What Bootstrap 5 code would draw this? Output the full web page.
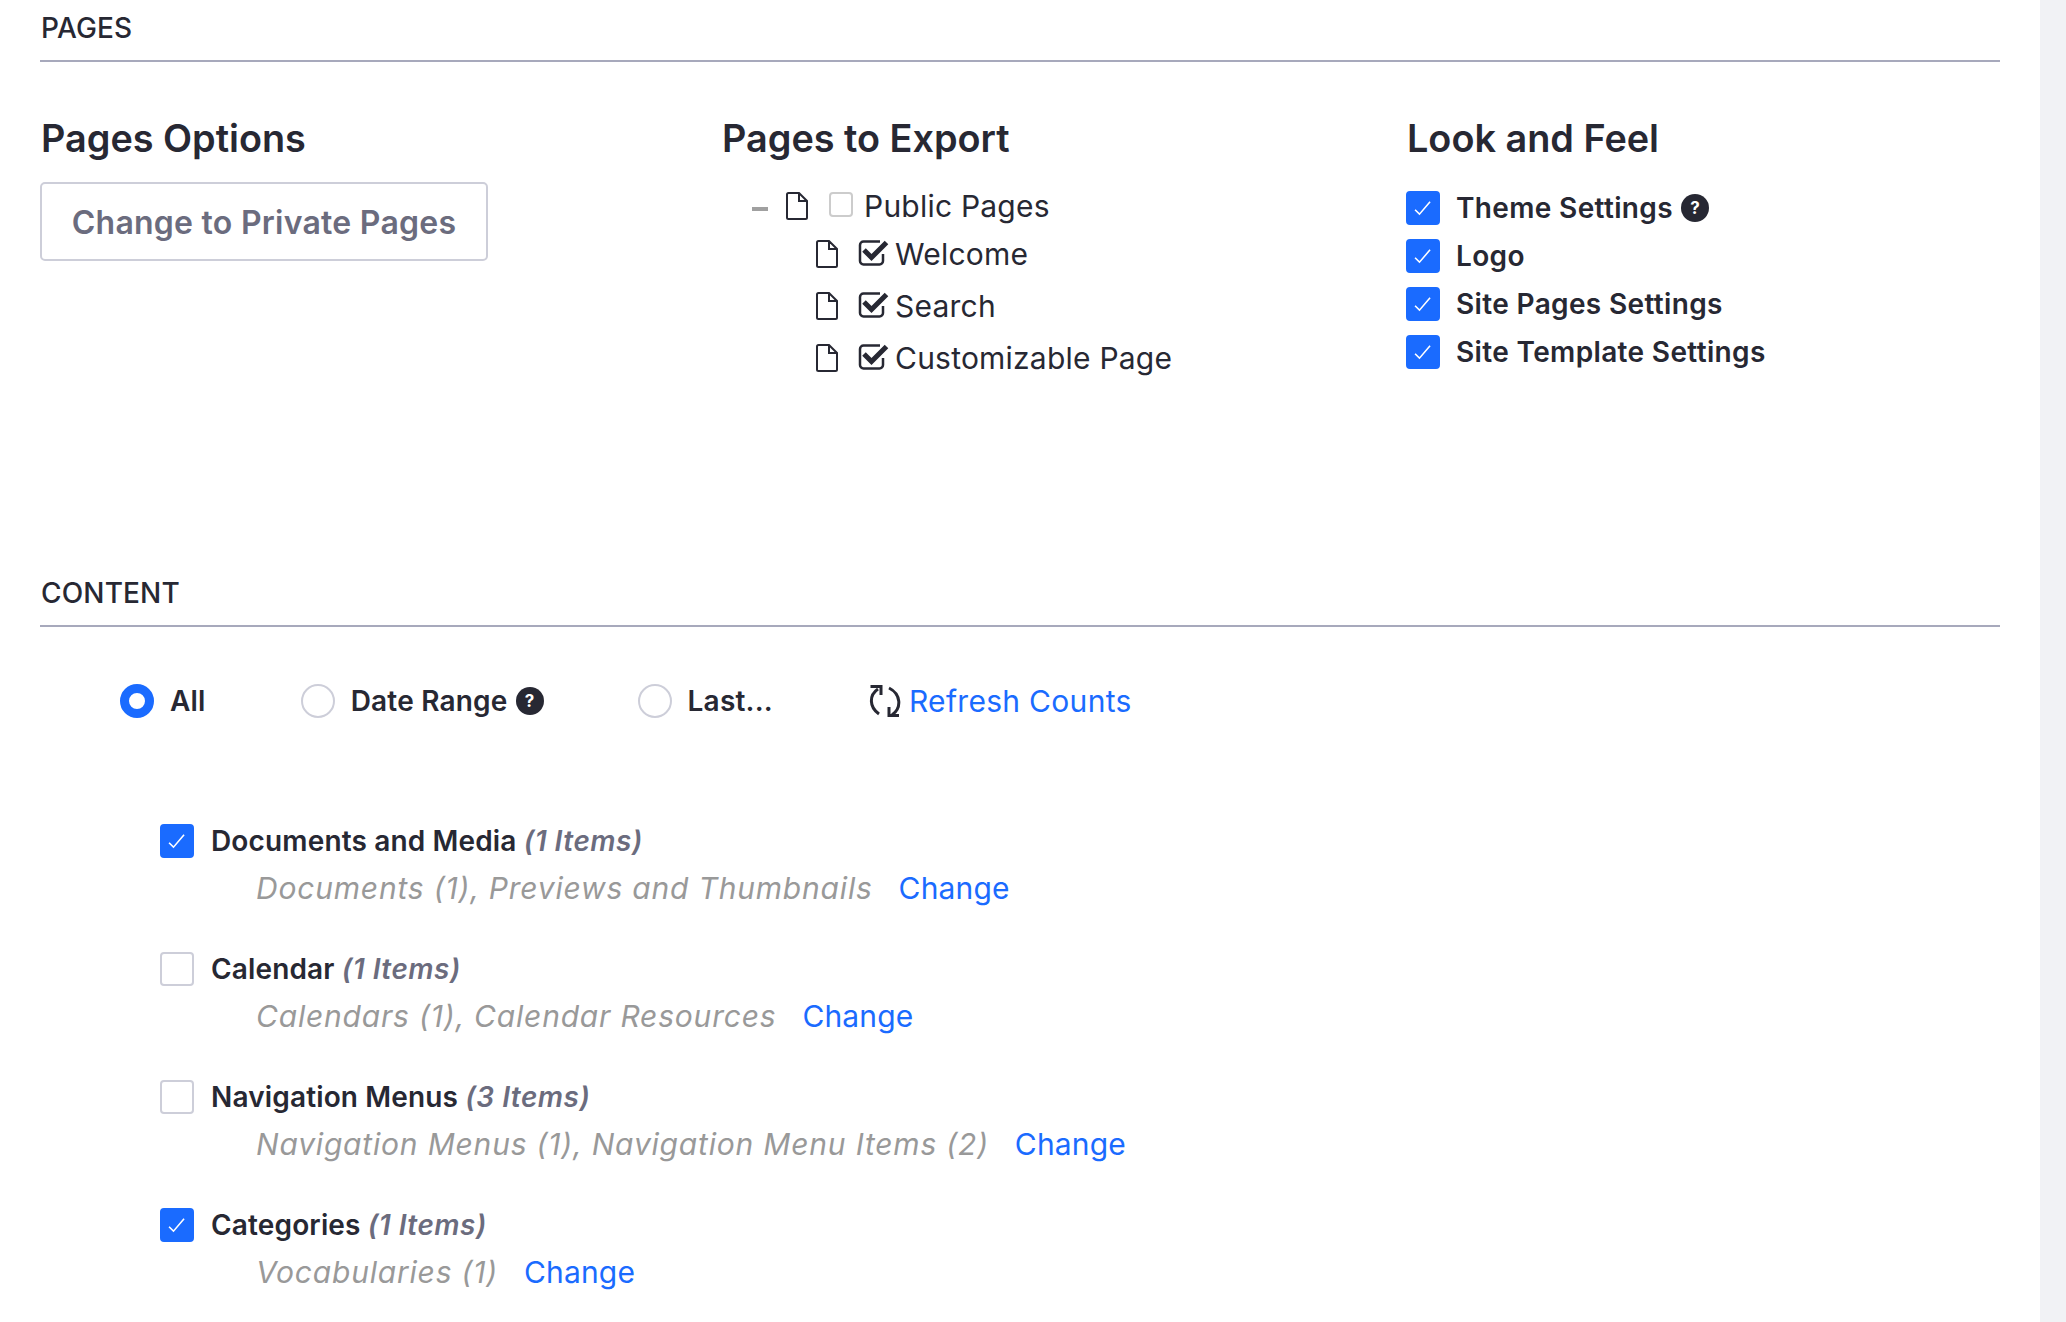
<!DOCTYPE html>
<html lang="en"><head><meta charset="utf-8"><title>Export</title>
<link href="https://cdn.jsdelivr.net/npm/bootstrap@5.3.0/dist/css/bootstrap.min.css" rel="stylesheet">
<style>
html,body{height:1322px;overflow:hidden}
body{font-family:Inter,"Liberation Sans",sans-serif;color:#272833;background:#fff;border-right:26px solid #f1f2f5;box-sizing:border-box;width:2066px;font-size:30px}
.sheet{padding:0 40px}
.sec-title{font-size:28px;font-weight:500;line-height:32px;padding-top:12px;padding-left:1px;border-bottom:2px solid #a7a9bc;margin:0;box-sizing:content-box;height:48px;letter-spacing:.15px}
.three{display:grid;grid-template-columns:683px 684px 1fr;height:503px;padding-top:52px}
.sub-h{font-size:37.8px;font-weight:600;line-height:48px;margin:0 0 20px;padding-left:1px}
.mid .sub-h{margin-left:-2px}
.end .sub-h{margin-left:-1px}
.btn-priv{font-size:32px;font-weight:600;color:#6b6c7e;border:2px solid #cdced9;border-radius:5px;background:#fff;width:448px;height:79px;padding:2px 0 0;letter-spacing:.25px}
.tree{padding-top:5px}
.tnode{display:flex;align-items:center;line-height:38px;letter-spacing:.22px}
.tnode.top{height:38px;padding-left:29px;margin-bottom:10px}
.tnode.kid{height:38px;padding-left:93px;margin-bottom:14px}
.dash{width:16px;height:4px;background:#a0a0a0;margin-right:18px;margin-top:5px}
.file{width:22px;height:28px;flex:none}
.box-empty{width:24px;height:25px;border:2px solid #ccc;border-radius:4px;margin:-4px 11px 0 21px;flex:none}
.box-tick{width:31px;height:27px;margin:-4px 6px 0 20px;flex:none}
.opts{padding-top:9px;margin-left:-1px}
.form-check-input.big{width:34px;height:34px;margin:0;float:none;border:2px solid #cdced9;border-radius:4px;flex:none}
.form-check-input.big:checked{background-color:#1a6bff;border-color:#1a6bff;background-image:url("data:image/svg+xml,%3csvg xmlns='http://www.w3.org/2000/svg' viewBox='0 0 34 34'%3e%3cpath fill='none' stroke='%23fff' stroke-width='1.8' d='M8 19l5 5L25 10'/%3e%3c/svg%3e");background-size:100%}
.form-check-input.round{width:34px;height:34px;margin:0;border:2px solid #cdced9;border-radius:50%;flex:none}
.form-check-input.round:checked{background-color:#fff;background-image:none;border:9px solid #1a6bff}
.opt{display:flex;align-items:center;gap:16px;height:34px;margin-bottom:14px;font-size:28px;font-weight:600;line-height:34px;letter-spacing:.35px}
.qmark{width:28px;height:28px;border-radius:50%;background:#272833;color:#fff;font-size:17px;font-weight:700;display:inline-flex;align-items:center;justify-content:center;line-height:1;flex:none;margin-left:-8px;letter-spacing:0}
.ranges{display:flex;align-items:center;height:34px;margin-top:57px;padding-left:80px;font-size:28px;font-weight:600;letter-spacing:.2px}
.ranges label{display:flex;align-items:center;gap:16px}
.r2{margin-left:95px}
.r3{margin-left:94px}
.rico{margin-left:96px;flex:none}
.rlink{font-size:30px;font-weight:400;color:#1a6bff;text-decoration:none;margin-left:8px;letter-spacing:.3px}
.items{margin-top:106px;padding-left:120px}
.entry{height:128px}
.ehead{display:flex;align-items:center;gap:17px;height:34px;font-size:28px;font-weight:600;line-height:34px;letter-spacing:.15px}
.ehead i{color:#6b6c7e;font-weight:600;letter-spacing:.5px}
.edet{padding-left:96px;margin-top:12px;font-size:30px;line-height:36px;display:flex;gap:26px}
.edet em{color:#999;letter-spacing:.8px}
.edet a{color:#1a6bff;text-decoration:none;letter-spacing:.15px}
</style></head><body>
<div class="sheet">
<h2 class="sec-title">PAGES</h2>
<div class="three">
 <div><h3 class="sub-h">Pages Options</h3><button class="btn btn-priv" type="button">Change to Private Pages</button></div>
 <div class="mid"><h3 class="sub-h">Pages to Export</h3>
  <div class="tree">
   <div class="tnode top"><span class="dash"></span><svg class="file" viewBox="0 0 22 28" fill="none" stroke="#272833" stroke-width="2"><path d="M2.5 1h10.5l8 8v16.5a1.5 1.5 0 0 1-1.5 1.500H2.500A1.500 1.500 0 0 1 1 25.500V2.500A1.500 1.500 0 0 1 2.500 1zM13 1v8h8"/></svg><span class="box-empty"></span><span>Public Pages</span></div>
   <div class="tnode kid"><svg class="file" viewBox="0 0 22 28" fill="none" stroke="#272833" stroke-width="2"><path d="M2.5 1h10.5l8 8v16.5a1.5 1.5 0 0 1-1.5 1.500H2.500A1.500 1.500 0 0 1 1 25.500V2.500A1.500 1.500 0 0 1 2.500 1zM13 1v8h8"/></svg><svg class="box-tick" viewBox="0 0 31 27"><path fill="none" stroke="#272833" stroke-width="2.500" d="M25 15v7a3.500 3.500 0 0 1-3.500 3.500h-16A3.500 3.500 0 0 1 2 22V6a3.500 3.500 0 0 1 3.500-3.500H22"/><path fill="none" stroke="#272833" stroke-width="5" d="M6 11l7.500 7.500L28.500 3.500"/></svg><span>Welcome</span></div>
   <div class="tnode kid"><svg class="file" viewBox="0 0 22 28" fill="none" stroke="#272833" stroke-width="2"><path d="M2.5 1h10.5l8 8v16.5a1.5 1.5 0 0 1-1.5 1.500H2.500A1.500 1.500 0 0 1 1 25.500V2.500A1.500 1.500 0 0 1 2.500 1zM13 1v8h8"/></svg><svg class="box-tick" viewBox="0 0 31 27"><path fill="none" stroke="#272833" stroke-width="2.500" d="M25 15v7a3.500 3.500 0 0 1-3.500 3.500h-16A3.500 3.500 0 0 1 2 22V6a3.500 3.500 0 0 1 3.500-3.500H22"/><path fill="none" stroke="#272833" stroke-width="5" d="M6 11l7.500 7.500L28.500 3.500"/></svg><span>Search</span></div>
   <div class="tnode kid"><svg class="file" viewBox="0 0 22 28" fill="none" stroke="#272833" stroke-width="2"><path d="M2.5 1h10.5l8 8v16.5a1.5 1.5 0 0 1-1.5 1.500H2.500A1.500 1.500 0 0 1 1 25.500V2.500A1.500 1.500 0 0 1 2.500 1zM13 1v8h8"/></svg><svg class="box-tick" viewBox="0 0 31 27"><path fill="none" stroke="#272833" stroke-width="2.500" d="M25 15v7a3.500 3.500 0 0 1-3.500 3.500h-16A3.500 3.500 0 0 1 2 22V6a3.500 3.500 0 0 1 3.500-3.500H22"/><path fill="none" stroke="#272833" stroke-width="5" d="M6 11l7.500 7.500L28.500 3.500"/></svg><span>Customizable Page</span></div>
  </div>
 </div>
 <div class="end"><h3 class="sub-h">Look and Feel</h3>
  <div class="opts">
  <label class="opt"><input class="form-check-input big" type="checkbox" checked><span>Theme Settings</span><span class="qmark">?</span></label>
  <label class="opt"><input class="form-check-input big" type="checkbox" checked><span>Logo</span></label>
  <label class="opt"><input class="form-check-input big" type="checkbox" checked><span>Site Pages Settings</span></label>
  <label class="opt"><input class="form-check-input big" type="checkbox" checked><span>Site Template Settings</span></label>
  </div>
 </div>
</div>
<h2 class="sec-title">CONTENT</h2>
<div class="ranges">
 <label><input class="form-check-input round" type="radio" name="r" checked>All</label>
 <label class="r2"><input class="form-check-input round" type="radio" name="r">Date Range<span class="qmark">?</span></label>
 <label class="r3"><input class="form-check-input round" type="radio" name="r">Last...</label>
 <svg class="rico" width="32" height="32" viewBox="0 0 32 32" fill="none" stroke="#272833" stroke-width="3"><path d="M9 4C0 10 0 22 10 29"/><path d="M20 3c12 6 13 20 3 27"/><path d="M1.500 1.500H12V10"/><path d="M30 30.500H20V22"/></svg>
 <a class="rlink" href="#">Refresh Counts</a>
</div>
<div class="items">
 <div class="entry"><label class="ehead"><input class="form-check-input big" type="checkbox" checked><span>Documents and Media <i>(1 Items)</i></span></label><div class="edet"><em>Documents (1), Previews and Thumbnails</em><a href="#">Change</a></div></div>
 <div class="entry"><label class="ehead"><input class="form-check-input big" type="checkbox"><span>Calendar <i>(1 Items)</i></span></label><div class="edet"><em>Calendars (1), Calendar Resources</em><a href="#">Change</a></div></div>
 <div class="entry"><label class="ehead"><input class="form-check-input big" type="checkbox"><span>Navigation Menus <i>(3 Items)</i></span></label><div class="edet"><em>Navigation Menus (1), Navigation Menu Items (2)</em><a href="#">Change</a></div></div>
 <div class="entry"><label class="ehead"><input class="form-check-input big" type="checkbox" checked><span>Categories <i>(1 Items)</i></span></label><div class="edet"><em>Vocabularies (1)</em><a href="#">Change</a></div></div>
</div>
</div>
</body></html>
